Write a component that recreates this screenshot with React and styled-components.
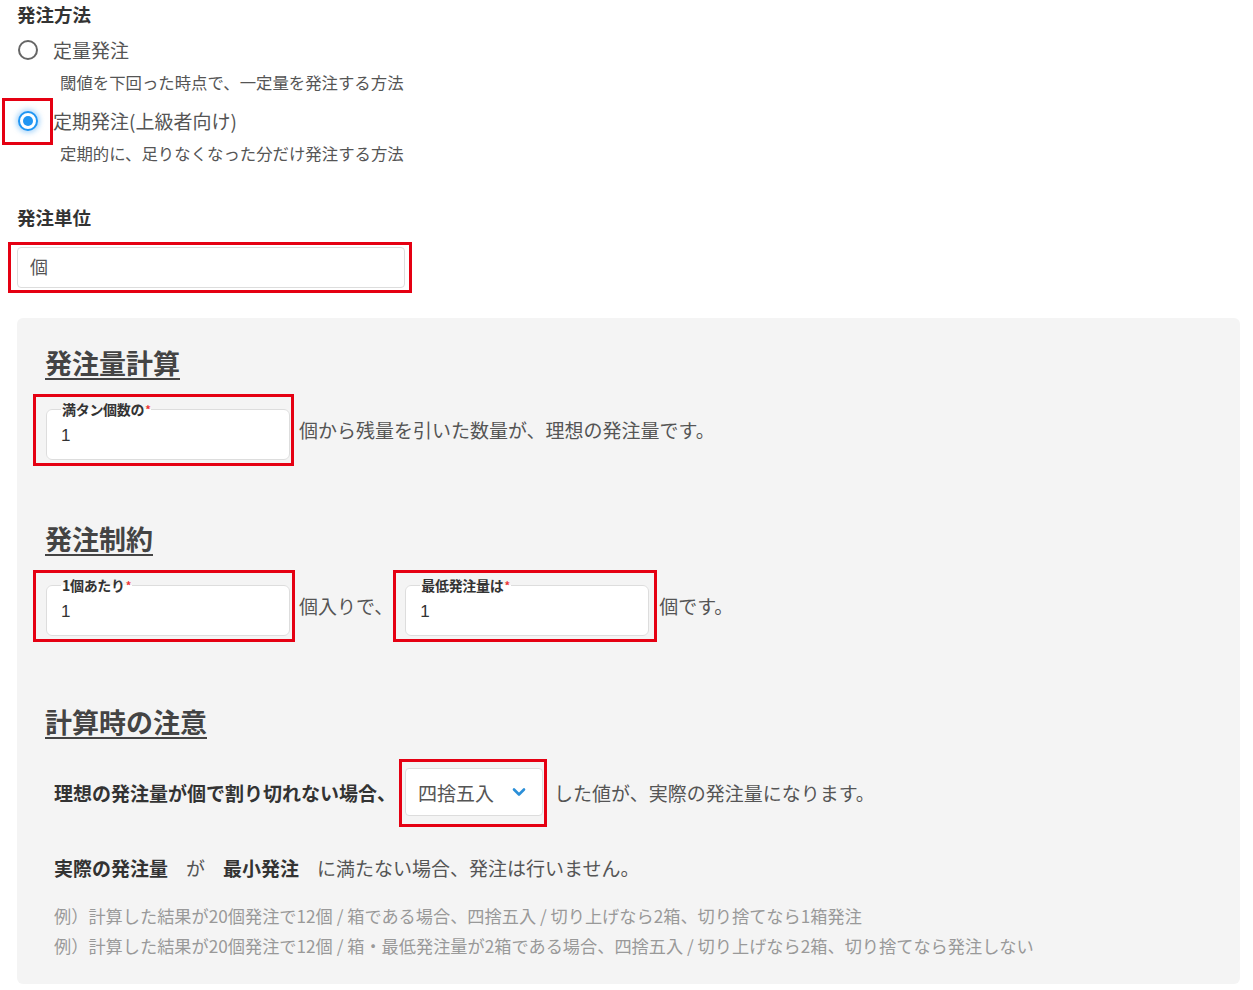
import React from "react";
import styled, { createGlobalStyle } from "styled-components";

const GlobalStyle = createGlobalStyle`
  html, body { margin: 0; padding: 0; background: #fff; }
  body { font-family: "Noto Sans CJK JP", "Noto Sans", sans-serif; }
`;

const RED = "#e50012";

const Page = styled.div`
  padding: 0 13px 0 17px;
  color: #555;
  font-family: "Noto Sans CJK JP", "Noto Sans", sans-serif;
`;

const FieldTitle = styled.div`
  font-size: 18.5px;
  font-weight: 700;
  line-height: 28px;
  color: #333;
  margin-top: ${(p) => p.$top || 0}px;
`;

const RadioGroup = styled.div`
  display: flex;
  flex-direction: column;
  gap: 11px;
  margin-top: 4px;
`;

const Option = styled.div`
  display: flex;
  flex-direction: column;
`;

const OptionRow = styled.label`
  display: flex;
  align-items: center;
  height: 36px;
  cursor: pointer;
`;

const RadioSlot = styled.span`
  display: flex;
  align-items: center;
  justify-content: ${(p) => (p.$marked ? "center" : "flex-start")};
  box-sizing: border-box;
  width: ${(p) => (p.$marked ? 51 : 36)}px;
  height: ${(p) => (p.$marked ? 47 : 36)}px;
  margin: ${(p) => (p.$marked ? "-5.5px 0 -5.5px -15px" : "0")};
  padding-left: ${(p) => (p.$marked ? 0 : 1)}px;
  border: ${(p) => (p.$marked ? `3px solid ${RED}` : "none")};
`;

const RadioCircle = styled.span`
  width: 20px;
  height: 20px;
  box-sizing: border-box;
  border-radius: 50%;
  border: 2px solid ${(p) => (p.$checked ? "#2196f3" : "#666")};
  display: flex;
  align-items: center;
  justify-content: center;
  background: #fff;
  box-shadow: ${(p) => (p.$checked ? "0 0 5px 2px rgba(33,150,243,0.35)" : "none")};
  &::after {
    content: "";
    width: 10px;
    height: 10px;
    border-radius: 50%;
    background: ${(p) => (p.$checked ? "#2196f3" : "transparent")};
  }
`;

const OptionLabel = styled.span`
  font-size: 19px;
  color: #555;
  line-height: 36px;
`;

const OptionDesc = styled.div`
  margin-top: 4px;
  padding-left: 43px;
  font-size: 16.4px;
  line-height: 20px;
  color: #555;
`;

const Marked = styled.div`
  display: flex;
  box-sizing: border-box;
  border: 3px solid ${RED};
  padding: ${(p) => p.$pad};
  margin: ${(p) => p.$margin || 0};
  width: ${(p) => (p.$width ? `${p.$width}px` : "auto")};
  flex-shrink: 0;
`;

const TextInput = styled.input`
  width: 100%;
  height: 41px;
  box-sizing: border-box;
  border: 1px solid #ddd;
  border-radius: 4px;
  padding: 0 12px 3px;
  font-family: inherit;
  font-size: 18px;
  color: #555;
  background: #fff;
  outline: none;
`;

const Panel = styled.div`
  margin-top: 25px;
  background: #f4f4f4;
  border-radius: 6px;
  padding: 27px 28px 23px;
`;

const Section = styled.section`
  margin-top: ${(p) => p.$top || 0}px;
`;

const Heading = styled.h2`
  margin: 0 0 13px;
  font-size: 27px;
  line-height: 36px;
  font-weight: 700;
  color: #444;
  text-decoration: underline;
  text-decoration-thickness: 2px;
  text-underline-offset: 4px;
`;

const Row = styled.div`
  display: flex;
  align-items: center;
  margin-top: ${(p) => p.$top || 0}px;
  padding-left: ${(p) => p.$indent || 0}px;
  margin-left: ${(p) => p.$shift || 0}px;
`;

const Fieldset = styled.fieldset`
  margin: 0;
  min-width: 0;
  width: 244px;
  box-sizing: border-box;
  border: 1px solid #ddd;
  border-radius: 6px;
  background: #fff;
  padding: 0 14px 4px;
`;

const Legend = styled.legend`
  padding: 0 1px;
  font-size: 14px;
  line-height: 16px;
  font-weight: 700;
  color: #333;
  letter-spacing: -0.3px;
`;

const Req = styled.span`
  color: #e33;
  font-size: 11px;
  vertical-align: top;
  margin-left: 1px;
`;

const NumInput = styled.input`
  display: block;
  width: 100%;
  height: 38px;
  border: none;
  outline: none;
  background: transparent;
  padding: 0;
  font-family: "Liberation Sans", "Noto Sans CJK JP", sans-serif;
  font-size: 17px;
  color: #333;
`;

const Inline = styled.span`
  font-size: 19px;
  line-height: 28px;
  color: #555;
  white-space: nowrap;
  margin: ${(p) => p.$margin || "0"};
`;

const Strong = styled.span`
  font-size: 19px;
  line-height: 28px;
  font-weight: 700;
  color: #333;
  white-space: nowrap;
  margin: ${(p) => p.$margin || "0"};
`;

const SelectBox = styled.button`
  display: flex;
  align-items: center;
  justify-content: space-between;
  width: 138px;
  height: 48px;
  box-sizing: border-box;
  border: 1px solid #ddd;
  border-radius: 4px;
  background: #fff;
  padding: 0 16px 0 12px;
  font-family: inherit;
  font-size: 19px;
  color: #555;
  cursor: pointer;
`;

const InfoLine = styled.div`
  display: flex;
  gap: 18px;
  margin-top: 27px;
  padding-left: 9px;
`;

const Examples = styled.div`
  margin-top: 19px;
  padding-left: 9px;
  font-size: 17.2px;
  line-height: 30px;
  color: #999;
`;

function Chevron() {
  return (
    <svg width="14" height="10" viewBox="0 0 14 10" aria-hidden="true">
      <path d="M2 2.5 L7 7.5 L12 2.5" fill="none" stroke="#2b8fd8" strokeWidth="2.6" strokeLinecap="round" strokeLinejoin="round" />
    </svg>
  );
}

function NumberField({ label, pad }) {
  return (
    <Marked $pad={pad}>
      <Fieldset>
        <Legend>
          {label}
          <Req>*</Req>
        </Legend>
        <NumInput defaultValue="1" />
      </Fieldset>
    </Marked>
  );
}

export default function App() {
  return (
    <>
      <GlobalStyle />
      <Page>
        <FieldTitle>発注方法</FieldTitle>
        <RadioGroup>
          <Option>
            <OptionRow>
              <RadioSlot>
                <RadioCircle />
              </RadioSlot>
              <OptionLabel>定量発注</OptionLabel>
            </OptionRow>
            <OptionDesc>閾値を下回った時点で、一定量を発注する方法</OptionDesc>
          </Option>
          <Option>
            <OptionRow>
              <RadioSlot $marked>
                <RadioCircle $checked />
              </RadioSlot>
              <OptionLabel>定期発注(上級者向け)</OptionLabel>
            </OptionRow>
            <OptionDesc>定期的に、足りなくなった分だけ発注する方法</OptionDesc>
          </Option>
        </RadioGroup>

        <FieldTitle $top={40}>発注単位</FieldTitle>
        <Marked $pad="2px 4px 2px 6px" $margin="11px 0 0 -9px" $width={404}>
          <TextInput defaultValue="個" />
        </Marked>

        <Panel>
          <Section>
            <Heading>発注量計算</Heading>
            <Row $shift={-12}>
              <NumberField label="満タン個数の" pad="4px 1px 3px 10px" />
              <Inline $margin="0 0 0 5px">個から残量を引いた数量が、理想の発注量です。</Inline>
            </Row>
          </Section>

          <Section $top={55}>
            <Heading>発注制約</Heading>
            <Row $shift={-12}>
              <NumberField label="1個あたり" pad="4px 2px 3px 10px" />
              <Inline $margin="0 0 0 4px">個入りで、</Inline>
              <NumberField label="最低発注量は" pad="4px 5px 3px 9px" />
              <Inline $margin="0 0 0 2px">個です。</Inline>
            </Row>
          </Section>

          <Section $top={62}>
            <Heading>計算時の注意</Heading>
            <Row $top={19} $indent={9}>
              <Strong>理想の発注量が個で割り切れない場合、</Strong>
              <Marked $pad="6px 1px 8px 3px" $margin="0 7px 0 3px">
                <SelectBox type="button">
                  <span>四捨五入</span>
                  <Chevron />
                </SelectBox>
              </Marked>
              <Inline>した値が、実際の発注量になります。</Inline>
            </Row>
            <InfoLine>
              <Strong>実際の発注量</Strong>
              <Inline>が</Inline>
              <Strong>最小発注</Strong>
              <Inline>に満たない場合、発注は行いません。</Inline>
            </InfoLine>
            <Examples>
              <div>例）計算した結果が20個発注で12個 / 箱である場合、四捨五入 / 切り上げなら2箱、切り捨てなら1箱発注</div>
              <div>例）計算した結果が20個発注で12個 / 箱・最低発注量が2箱である場合、四捨五入 / 切り上げなら2箱、切り捨てなら発注しない</div>
            </Examples>
          </Section>
        </Panel>
      </Page>
    </>
  );
}
